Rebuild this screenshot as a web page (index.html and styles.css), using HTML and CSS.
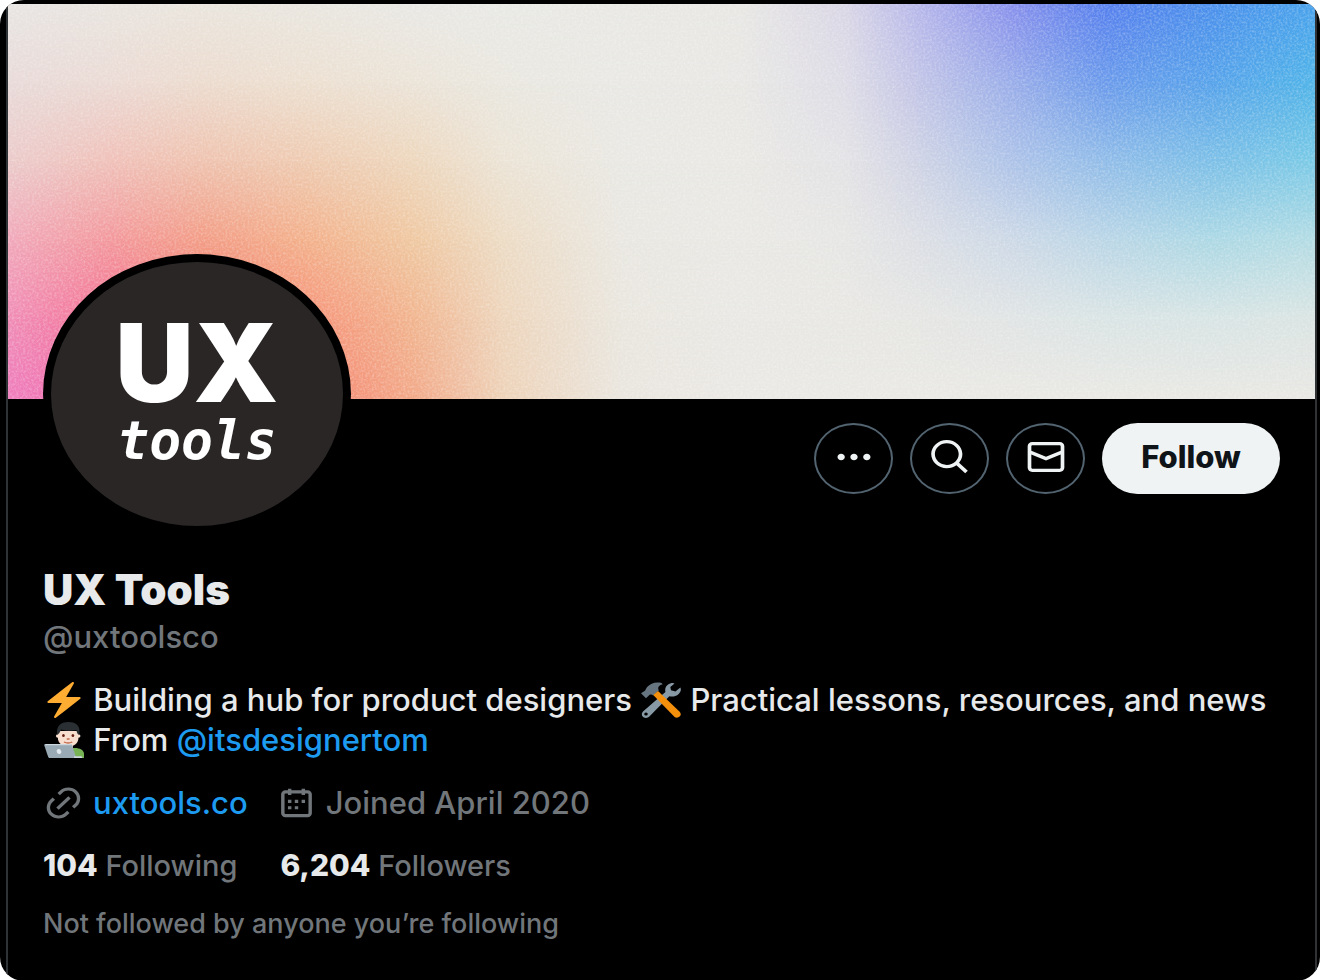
FILE: index.html
```html
<!DOCTYPE html>
<html lang="en">
<head>
<meta charset="utf-8">
<meta name="viewport" content="width=device-width, initial-scale=1">
<title>UX Tools (@uxtoolsco)</title>
<link rel="stylesheet" href="styles.css">
</head>
<body>
<main class="card">
  <div class="column">
    <div class="banner">
      <div class="tone tone-1"></div>
      <div class="tone tone-2"></div>
      <div class="tone tone-3"></div>
      <div class="tone tone-4"></div>
      <div class="tone tone-5"></div>
      <div class="tone tone-6"></div>
      <svg class="grain" aria-hidden="true">
        <filter id="grain"><feTurbulence type="fractalNoise" baseFrequency="0.45" numOctaves="2" seed="4"/><feColorMatrix values="0 0 0 0 1  0 0 0 0 1  0 0 0 0 1  1.6 0 0 0 -0.6"/></filter>
        <rect width="100%" height="100%" filter="url(#grain)"/>
      </svg>
    </div>
    <div class="profile">
      <div class="top">
        <div class="avatar">
          <span class="avatar-ux">UX</span>
          <span class="avatar-tools">tools</span>
        </div>
        <div class="actions">
          <button class="round" type="button" aria-label="More"><svg class="icon" viewBox="0 0 24 24" preserveAspectRatio="none"><path d="M3 12c0-1.1.9-2 2-2s2 .9 2 2-.9 2-2 2-2-.9-2-2zm9 2c1.1 0 2-.9 2-2s-.9-2-2-2-2 .9-2 2 .9 2 2 2zm7 0c1.1 0 2-.9 2-2s-.9-2-2-2-2 .9-2 2 .9 2 2 2z"/></svg></button>
          <button class="round" type="button" aria-label="Search"><svg class="icon" viewBox="0 0 24 24" preserveAspectRatio="none"><path d="M10.25 3.75c-3.59 0-6.5 2.91-6.5 6.5s2.91 6.5 6.5 6.5c1.795 0 3.419-.726 4.596-1.904 1.178-1.177 1.904-2.801 1.904-4.596 0-3.59-2.91-6.5-6.5-6.5zm-8.5 6.5c0-4.694 3.806-8.5 8.5-8.5s8.5 3.806 8.5 8.5c0 1.986-.682 3.815-1.824 5.262l4.781 4.781-1.414 1.414-4.781-4.781c-1.447 1.142-3.276 1.824-5.262 1.824-4.694 0-8.5-3.806-8.5-8.5z"/></svg></button>
          <button class="round" type="button" aria-label="Message"><svg class="icon" viewBox="0 0 24 24" preserveAspectRatio="none"><path d="M1.998 5.5c0-1.381 1.119-2.5 2.5-2.5h15c1.381 0 2.5 1.119 2.5 2.5v13c0 1.381-1.119 2.5-2.5 2.5h-15c-1.381 0-2.5-1.119-2.5-2.5v-13zm2.5-.5c-.276 0-.5.224-.5.5v2.764l8 3.638 8-3.636V5.5c0-.276-.224-.5-.5-.5h-15zm15.5 5.463l-8 3.636-8-3.638V18.5c0 .276.224.5.5.5h15c.276 0 .5-.224.5-.5v-8.037z"/></svg></button>
          <button class="follow" type="button">Follow</button>
        </div>
      </div>
      <h1 class="name">UX Tools</h1>
      <p class="handle">@uxtoolsco</p>
      <p class="bio">
        <svg class="emoji" role="img" aria-label="High voltage" viewBox="0 0 36 36" preserveAspectRatio="none"><path fill="#ffac33" d="M32.938 15.651C32.792 15.26 32.418 15 32 15H19.925L26.89 1.458c.219-.426.106-.947-.271-1.243C26.437.071 26.218 0 26 0c-.233 0-.466.082-.653.243L18 6.588 3.347 19.243c-.316.273-.43.714-.284 1.105S3.582 21 4 21h12.075L9.11 34.542c-.219.426-.106.947.271 1.243.182.144.401.215.619.215.233 0 .466-.082.653-.243L18 29.412l14.653-12.655c.317-.273.43-.714.285-1.106z"/></svg>
        Building a hub for product designers
        <svg class="emoji" role="img" aria-label="Hammer and wrench" viewBox="0 0 36 36" preserveAspectRatio="none">
          <path fill="#8899a6" d="M27.5 1C23.5 2 21 5.500 22 10L2.300 29C0 31.200 .5 34 2.200 35.200C4 36.500 6.300 36 7.500 34.500L25.500 14.300C30 15.500 34 13.200 35.500 9.500C36 8 36 6.500 35.400 5.500L31 9.500L27 8.200L26.400 5L30.200 1.500C29.500 .8 28.500 .8 27.500 1Z"/>
          <circle cx="4.500" cy="32" r="1.600" fill="#000"/>
          <path fill="#66757f" d="M18.500 1C13 -.5 8.500 1.500 5.500 5C4.300 6.500 4.300 8.200 3.200 9L0 11.300L4.500 16.200L7.800 12.700C9.200 12.300 10.200 12.600 11 13.500L16 8.500C14.800 6 15.500 3.200 19.500 2.200Z"/>
          <path fill="#f4900c" d="M11 13L15.300 9L34.800 29.800C36 31.200 36 33.200 34.800 34.600C33.200 36.200 31.200 36 30 34.700Z"/>
        </svg>
        Practical lessons, resources, and news<br>
        <svg class="emoji" role="img" aria-label="Technologist" viewBox="0 0 36 36" preserveAspectRatio="none">
          <path fill="#77b255" d="M10 36v-4c0-4 3-6 7-6h11c4 0 8 2 8 6v4z"/>
          <path fill="#f3d2c7" d="M18 22h8v5q-4 4-8 0z"/>
          <path fill="#f7dece" d="M12.500 9h18.500v7c0 5-4 8.500-9.200 8.500S12.500 21 12.500 16z"/>
          <circle cx="12.500" cy="14" r="1.800" fill="#f7dece"/><circle cx="31" cy="14" r="1.800" fill="#f7dece"/>
          <path fill="#292f33" d="M12 13C10.500 4 15 0 22 0s11.500 4 9.600 13l-1.600-1.500-1-3.500c-4 1-9 1-13.500-.5L13.800 11z"/>
          <ellipse cx="17.500" cy="13.500" rx="1.200" ry="1.500" fill="#662113"/><ellipse cx="26" cy="13.500" rx="1.200" ry="1.500" fill="#662113"/>
          <path fill="none" stroke="#c1694f" stroke-width="1.300" d="M20.500 17h2.500M18 20q3.700 2 7.500 0"/>
          <path fill="#99aab5" d="M1.500 22h22c1 0 1.500.4 1.800 1.300L29 36H5.500c-1 0-1.500-.5-1.800-1.300L.3 23.500C0 22.500.5 22 1.500 22z"/>
          <path fill="#ccd6dd" d="M1.500 22h22c1 0 1.500.4 1.800 1.300H1zM27 34.300h6.500q1 0 1 1.700H27z"/>
          <ellipse cx="13.500" cy="29.500" rx="2" ry="2.500" fill="#e1e8ed" transform="rotate(-15 13.500 29.500)"/>
        </svg>
        From <a class="link" href="#itsdesignertom">@itsdesignertom</a>
      </p>
      <div class="meta">
        <span class="meta-item"><svg class="meta-icon" viewBox="0 0 24 24" preserveAspectRatio="none" aria-hidden="true"><path d="M18.360 5.640c-1.950-1.960-5.110-1.960-7.070 0L9.880 7.050 8.460 5.640l1.420-1.420c2.730-2.730 7.160-2.730 9.900 0 2.730 2.740 2.730 7.170 0 9.900l-1.420 1.420-1.410-1.420 1.410-1.410c1.960-1.960 1.960-5.120 0-7.070zm-2.120 3.530l-7.070 7.070-1.410-1.410 7.070-7.070 1.410 1.410zm-12.020.71l1.420-1.420 1.410 1.420-1.410 1.410c-1.960 1.960-1.960 5.120 0 7.070 1.950 1.960 5.110 1.960 7.070 0l1.410-1.410 1.420 1.410-1.420 1.420c-2.730 2.730-7.160 2.730-9.900 0-2.730-2.740-2.730-7.170 0-9.900z"/></svg><a class="link" href="#website">uxtools.co</a></span>
        <span class="meta-item"><svg class="meta-icon" viewBox="0 0 24 24" preserveAspectRatio="none" aria-hidden="true"><path d="M7 4V3h2v1h6V3h2v1h1.500C19.890 4 21 5.120 21 6.500v12c0 1.380-1.110 2.500-2.500 2.500h-13C4.120 21 3 19.880 3 18.500v-12C3 5.120 4.120 4 5.500 4H7zm0 2H5.500c-.27 0-.5.22-.5.5v12c0 .28.23.5.5.5h13c.28 0 .5-.22.5-.5v-12c0-.28-.22-.5-.5-.5H17v1h-2V6H9v1H7V6zm0 6h2v-2H7v2zm0 4h2v-2H7v2zm4-4h2v-2h-2v2zm0 4h2v-2h-2v2zm4-4h2v-2h-2v2z"/></svg>Joined April 2020</span>
      </div>
      <div class="stats">
        <a class="stat" href="#following"><strong class="count">104</strong> Following</a>
        <a class="stat" href="#followers"><strong class="count">6,204</strong> Followers</a>
      </div>
      <p class="note">Not followed by anyone you’re following</p>
    </div>
  </div>
</main>
</body>
</html>
```

FILE: styles.css
```css
* { box-sizing: border-box; }

body {
  margin: 0;
  background: #fff;
  font-family: Inter, "Liberation Sans", sans-serif;
  font-size: 31px;
  font-weight: 500;
  line-height: 40px;
  color: #e7e9ea;
}

h1, p { margin: 0; }
a { color: inherit; text-decoration: none; }

.card {
  display: flex;
  min-height: 100vh;
  padding: 4px 3px 0 6px;
  background: #000;
  border-radius: 24px;
  overflow: hidden;
}

.column {
  flex: 1;
  min-width: 0;
  border: solid #2f3336;
  border-width: 0 2px;
}

/* Each tone is a horizontal blend that fades into the next one down. */
.banner {
  display: grid;
  grid-template: 100% / 100%;
  aspect-ratio: 1307 / 395;
}

.tone, .grain { grid-area: 1 / 1; }

.tone-1 {
  background: linear-gradient(90deg, #e8e5e3 0%, #e9e5df 8%, #eae5dd 15%, #e9e6df 23%, #e9e8e4 31%, #e9e9e5 38%, #e9e8e4 47%, #e8e7e4 56%, #d9d6e5 64%, #babaea 69%, #868fec 77%, #5680ee 84%, #4a8fec 92%, #48a2ec 100%);
}

.tone-2 {
  background: linear-gradient(90deg, #e8dad8 0%, #ebdad4 8%, #ecdbce 15%, #ecdfd0 23%, #ebe3d7 31%, #e9e7df 38%, #e9e8e4 47%, #e8e7e4 56%, #dddce6 64%, #c5c6e6 69%, #98ace9 77%, #6a9aeb 84%, #56a2ea 92%, #50b4e8 100%);
  mask-image: linear-gradient(transparent 0%, #000 20%);
}

.tone-3 {
  background: linear-gradient(90deg, #ebcaca 0%, #f0c0b8 8%, #efc2ae 15%, #eecab0 23%, #edd6bc 31%, #ebe3d5 38%, #e9e8e3 47%, #e9e8e4 56%, #e3e2e5 64%, #d1d4e4 69%, #acc2e8 77%, #90bce8 84%, #7cbfe7 92%, #7acae6 100%);
  mask-image: linear-gradient(transparent 20%, #000 40%);
}

.tone-4 {
  background: linear-gradient(90deg, #f1a8ba 0%, #f3979b 8%, #f39c85 15%, #f3b08a 23%, #efc7a0 31%, #ecdbc4 38%, #e9e7e1 47%, #e9e8e4 56%, #e6e6e4 64%, #dddfe4 69%, #ccd8e6 77%, #bad6e6 84%, #acd8e4 92%, #b4dce4 100%);
  mask-image: linear-gradient(transparent 40%, #000 60%);
}

.tone-5 {
  background: linear-gradient(90deg, #f08cb6 0%, #f47092 8%, #f57e74 15%, #f6947a 23%, #f1b48e 31%, #edd5bc 38%, #e9e6de 47%, #e9e8e4 56%, #e8e7e3 64%, #e6e6e3 69%, #e0e4e4 77%, #dae4e4 84%, #d8e4e4 92%, #dae4e2 100%);
  mask-image: linear-gradient(transparent 60%, #000 80%);
}

.tone-6 {
  background: linear-gradient(90deg, #ee7cbc 0%, #f06ca8 8%, #f47868 15%, #f58470 23%, #f2a888 31%, #edd2b8 38%, #e9e5de 47%, #eae8e4 56%, #e9e8e4 64%, #e9e8e3 84%, #e8e7e3 100%);
  mask-image: linear-gradient(transparent 80%, #000 100%);
}

.grain {
  display: block;
  width: 100%;
  height: 100%;
  opacity: 0.35;
}

.profile { padding: 0 35px 37px; }

.top {
  display: flex;
  justify-content: space-between;
  align-items: flex-start;
  margin-bottom: 32px;
}

.avatar {
  display: flex;
  flex-direction: column;
  align-items: center;
  justify-content: center;
  width: 308px;
  height: 280px;
  margin-top: -145px;
  border: 8px solid #000;
  border-radius: 50%;
  background: #2a2626;
  color: #fff;
  position: relative;
}

.avatar-ux {
  font-size: 108px;
  font-weight: 900;
  line-height: 94px;
}

.avatar-tools {
  font-family: "DejaVu Sans Mono", monospace;
  font-size: 53px;
  font-style: italic;
  font-weight: 700;
  line-height: 62px;
}

.actions {
  display: flex;
  gap: 17px;
  padding-top: 24px;
}

.round, .follow {
  display: flex;
  align-items: center;
  justify-content: center;
  height: 71px;
  padding: 0 0 3px;
  border: 0;
  font: inherit;
  cursor: pointer;
}

.round {
  width: 79px;
  border: 2px solid #536471;
  border-radius: 50%;
  background: #000;
}

.follow {
  width: 178px;
  border-radius: 40px;
  background: #eff3f4;
  color: #0f1419;
  font-weight: 800;
}

.icon {
  width: 44px;
  height: 40px;
  fill: #eff3f4;
}

.name {
  font-size: 42px;
  font-weight: 900;
  line-height: 48px;
}

.handle { margin-top: 3px; color: #71767b; }

.bio { margin-top: 23px; }

.emoji {
  width: 40px;
  height: 36px;
  margin: 0 1px;
  vertical-align: -7px;
}

.link { color: #1d9bf0; }

.meta {
  display: flex;
  gap: 28px;
  margin-top: 23px;
  color: #71767b;
}

.meta-item {
  display: flex;
  align-items: center;
  gap: 9px;
}

.meta-icon {
  width: 41px;
  height: 38px;
  fill: #71767b;
}

.stats {
  display: flex;
  gap: 43px;
  margin-top: 22px;
  font-size: 29px;
  color: #71767b;
}

.count { color: #e7e9ea; font-size: 30px; font-weight: 800; }

.note {
  margin-top: 18px;
  font-size: 27px;
  color: #71767b;
}
```
